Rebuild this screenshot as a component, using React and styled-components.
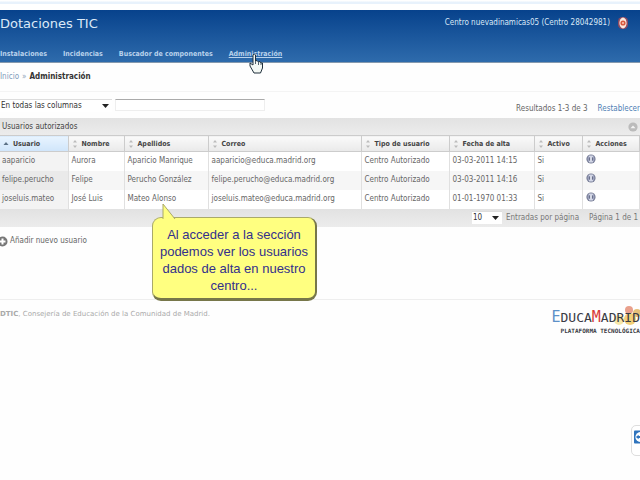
import React from 'react';
import styled, { createGlobalStyle } from 'styled-components';

const GlobalStyle = createGlobalStyle`
    body {
        margin: 0;
        background: #fefefe;
        overflow: hidden;
        font-family: "DejaVu Sans Condensed", "DejaVu Sans", sans-serif;
        font-size: 8px;
        line-height: 12px;
        color: #666;
    }
    * {
        box-sizing: border-box;
    }
`;

const Page = styled.div`
    position: relative;
    min-height: 100vh;
    overflow: hidden;
`;

const TopStrip = styled.div`
    height: 10px;
    border-bottom: 6px solid #fff;
    background: linear-gradient(#fff 1px, #e8f2fc 2px);
`;

const Header = styled.header`
    height: 53px;
    display: flex;
    flex-direction: column;
    justify-content: space-between;
    background: linear-gradient(#07428c, #2e6bac);
    border-bottom: 1px solid #8599ae;
    color: #dbe9f8;
`;

const HeaderTop = styled.div`
    display: flex;
    align-items: center;
    justify-content: space-between;
    height: 28px;
    padding-right: 12px;
`;

const Title = styled.h1`
    margin: 0;
    font-family: "DejaVu Sans", sans-serif;
    font-size: 13px;
    line-height: 16px;
    font-weight: normal;
`;

const Account = styled.div`
    display: flex;
    align-items: center;
    gap: 8px;
    padding-bottom: 2px;
`;

const IconButton = styled.button`
    display: inline-flex;
    padding: 0;
    border: 0;
    background: none;
    color: inherit;
`;

const Nav = styled.nav`
    display: flex;
    gap: 16px;
    padding-bottom: 2px;
`;

const NavLink = styled.a`
    font-size: 7px;
    font-weight: bold;
    color: #b9d2ec;
    text-decoration: ${props => props.$active ? 'underline' : 'none'};
`;

const Breadcrumb = styled.div`
    display: flex;
    align-items: center;
    gap: 3px;
    height: 29px;
    border-bottom: 1px solid #f4f4f4;
    color: #8fa3b8;

    a {
        color: #7f9cbc;
        text-decoration: none;
    }
    strong {
        color: #333;
    }
`;

const Filters = styled.div`
    display: flex;
    align-items: center;
    gap: 3px;
    height: 26px;
`;

const SelectBox = styled.div`
    display: grid;
    align-items: center;
    width: ${props => props.$width}px;
    height: 13px;
    background: #fff;
    border-top: 1px solid #ddd;

    select, svg {
        grid-area: 1 / 1;
    }
    svg {
        justify-self: end;
        margin-right: 3px;
        pointer-events: none;
    }
    select {
        appearance: none;
        width: 100%;
        height: 12px;
        padding: 0 1px;
        border: 0;
        background: none;
        font: inherit;
        color: #333;
    }
`;

const Search = styled.input`
    width: 150px;
    height: 12px;
    padding: 0 2px;
    border: 1px solid #eee;
    border-top-color: #aaa;
    background: #fff;
    font: inherit;
`;

const Results = styled.div`
    display: flex;
    flex: 1;
    justify-content: flex-end;
    gap: 10px;
    padding-top: 8px;
    white-space: nowrap;

    a {
        color: #4f7fb5;
        text-decoration: none;
    }
`;

const Bar = styled.div`
    display: flex;
    align-items: center;
    justify-content: ${props => props.$end ? 'flex-end' : 'space-between'};
    gap: ${props => props.$end ? 4 : 0}px;
    height: ${props => props.$end ? 18 : 17}px;
    padding: 0 2px;
    background: linear-gradient(#e2e2e2, #ececec);
    color: ${props => props.$end ? '#777' : '#444'};
`;

const PageCount = styled.span`
    padding-left: 6px;
`;

const Table = styled.table`
    width: 100%;
    table-layout: fixed;
    border-collapse: collapse;
`;

const Th = styled.th`
    width: ${props => props.$width || 'auto'};
    height: 16px;
    padding: 0 3px;
    border-top: 1px solid #ccc;
    border-bottom: 1px solid #ccc;
    border-right: 1px solid #ccc;
    background: ${props => props.$sorted
        ? 'linear-gradient(#e8f4ff, #cfe5fa)'
        : 'linear-gradient(#fafafa, #e9e9e9)'};
    font-size: 7px;
    color: #444;
    text-align: left;
    white-space: nowrap;
`;

const ThInner = styled.span`
    display: flex;
    align-items: center;
    gap: 4px;
`;

const Td = styled.td`
    height: 19px;
    padding: 0 3px;
    border-right: 1px solid #e0e0e0;
    background: ${props => props.$shade};
    white-space: nowrap;
    vertical-align: middle;

    &:first-child {
        padding-left: 2px;
    }
`;

const AddUser = styled.button`
    display: flex;
    align-items: center;
    gap: 2px;
    height: 29px;
    margin-bottom: 43px;
    padding: 0;
    border: 0;
    background: none;
    font: inherit;
    color: #666;
`;

const Footer = styled.footer`
    display: flex;
    justify-content: space-between;
    padding-top: 8px;
    border-top: 1px solid #eee;
    font-family: "DejaVu Sans", sans-serif;
    font-size: 7px;
    color: #aaa;
`;

const Logo = styled.div`
    display: grid;
    align-content: start;
    justify-items: end;
    font-family: "DejaVu Sans Mono", monospace;
    font-weight: bold;
    color: #393a44;
    white-space: nowrap;

    svg, span {
        grid-column: 1;
    }
    svg {
        grid-row: 1;
        overflow: visible;
    }
`;

const LogoName = styled.span`
    grid-row: 1;
    z-index: 1;
    font-size: 13px;
    line-height: 18px;
    font-weight: normal;
`;

const LogoCap = styled.b`
    font-size: 15px;
    font-weight: normal;
    color: ${props => props.color};
`;

const LogoSub = styled.span`
    font-size: 6px;
    line-height: 8px;
`;

const Callout = styled.div`
    position: absolute;
    left: 152px;
    top: 217px;
    width: 165px;
    padding: 8px 6px 4px;
    border: 1px solid #a9a96a;
    border-right: 2px solid #77774a;
    border-bottom: 3px solid #77774a;
    border-radius: 9px;
    background: #ffff80;
    font-family: "Liberation Sans", sans-serif;
    font-size: 13px;
    line-height: 17px;
    text-align: center;
    color: #33308c;
`;

const CalloutTail = styled.svg`
    position: absolute;
    left: 8px;
    top: -15px;
`;

const Pointer = styled.svg`
    position: absolute;
    left: 249px;
    top: 53px;
`;

const SideTab = styled.button`
    position: absolute;
    right: -10px;
    top: 425px;
    display: flex;
    align-items: flex-start;
    width: 19px;
    height: 31px;
    padding: 4px 2px;
    border: 1px solid #ddd;
    border-radius: 5px;
    background: #fff;
`;

const columns = [
    { label: 'Usuario', width: '68px', sorted: true },
    { label: 'Nombre', width: '56px' },
    { label: 'Apellidos', width: '84px' },
    { label: 'Correo', width: '153px' },
    { label: 'Tipo de usuario', width: '88px' },
    { label: 'Fecha de alta', width: '85px' },
    { label: 'Activo', width: '48px' },
    { label: 'Acciones' },
];

const users = [
    ['aaparicio', 'Aurora', 'Aparicio Manrique', 'aaparicio@educa.madrid.org', 'Centro Autorizado', '03-03-2011 14:15', 'Si'],
    ['felipe.perucho', 'Felipe', 'Perucho González', 'felipe.perucho@educa.madrid.org', 'Centro Autorizado', '03-03-2011 14:16', 'Si'],
    ['joseluis.mateo', 'José Luis', 'Mateo Alonso', 'joseluis.mateo@educa.madrid.org', 'Centro Autorizado', '01-01-1970 01:33', 'Si'],
];

const Arrow = () => (
    <svg width="7" height="4" viewBox="0 0 7 4"><path d="M0 0h7L3.5 4z" fill="#222" /></svg>
);

const SortIcon = ({ sorted }) => (
    <svg width="6" height="10" viewBox="0 0 6 10">
        {sorted
            ? <path d="M0.5 6L3 3L5.5 6z" fill="#5b7186" />
            : <path d="M1 3.5L3 1L5 3.5zM1 6.5L3 9L5 6.5z" fill="#bbb" />}
    </svg>
);

const ExitIcon = () => (
    <svg width="10" height="12" viewBox="0 0 10 12">
        <rect x="0" y="0" width="10" height="12" rx="4.5" fill="#8f4a60" />
        <ellipse cx="5" cy="6" rx="3.6" ry="5.4" fill="#fbe9df" />
        <circle cx="5" cy="6" r="2.6" fill="#d9593e" />
        <circle cx="5" cy="6" r="1" fill="#f6cdbd" />
    </svg>
);

const InfoIcon = () => (
    <svg width="10" height="10" viewBox="0 0 10 10">
        <circle cx="5" cy="5" r="4.6" fill="#777d96" />
        <circle cx="5" cy="5" r="3.4" fill="#a9afc9" />
        <path d="M3 2.2h4M3 7.8h4" stroke="#e4e7f2" />
        <path d="M3.3 3.5v3M6.7 3.5v3" stroke="#59607c" />
        <path d="M5 3v4" stroke="#fff" />
    </svg>
);

const AddIcon = () => (
    <svg width="8" height="11" viewBox="0 0 8 11">
        <circle cx="2.5" cy="5.5" r="5" fill="#777" />
        <path d="M2.5 2.5v6M-0.5 5.5h6" stroke="#fff" strokeWidth="2" />
    </svg>
);

const ToggleIcon = () => (
    <svg width="10" height="10" viewBox="0 0 10 10">
        <circle cx="5" cy="5" r="4.6" fill="#bbb" />
        <path d="M2.5 6.2L5 3.4L7.5 6.2z" fill="#f4f4f4" />
    </svg>
);

const App = () => (
    <Page>
        <GlobalStyle />
        <TopStrip />
        <Header>
            <HeaderTop>
                <Title>Dotaciones TIC</Title>
                <Account>
                    Centro nuevadinamicas05 (Centro 28042981)
                    <IconButton aria-label="Salir"><ExitIcon /></IconButton>
                </Account>
            </HeaderTop>
            <Nav>
                <NavLink href="#instalaciones">Instalaciones</NavLink>
                <NavLink href="#incidencias">Incidencias</NavLink>
                <NavLink href="#buscador">Buscador de componentes</NavLink>
                <NavLink href="#administracion" $active>Administración</NavLink>
            </Nav>
        </Header>

        <Breadcrumb>
            <a href="#inicio">Inicio</a>
            <span>»</span>
            <strong>Administración</strong>
        </Breadcrumb>

        <Filters>
            <SelectBox $width={112}>
                <select aria-label="Columna"><option>En todas las columnas</option></select>
                <Arrow />
            </SelectBox>
            <Search aria-label="Buscar" />
            <Results>
                <span>Resultados 1-3 de 3</span>
                <a href="#restablecer">Restablecer</a>
            </Results>
        </Filters>

        <Bar>
            <span>Usuarios autorizados</span>
            <IconButton aria-label="Plegar"><ToggleIcon /></IconButton>
        </Bar>
        <Table>
            <thead>
                <tr>
                    {columns.map(column => (
                        <Th key={column.label} $width={column.width} $sorted={column.sorted}>
                            <ThInner>
                                <SortIcon sorted={column.sorted} />
                                {column.label}
                            </ThInner>
                        </Th>
                    ))}
                </tr>
            </thead>
            <tbody>
                {users.map((user, i) => (
                    <tr key={user[0]}>
                        {user.map((value, j) => (
                            <Td key={j} $shade={j === 0 ? (i % 2 ? '#eaeaea' : '#f3f3f3') : (i % 2 ? '#f6f6f6' : '#fff')}>
                                {value}
                            </Td>
                        ))}
                        <Td $shade={i % 2 ? '#f6f6f6' : '#fff'}>
                            <IconButton aria-label="Ver usuario"><InfoIcon /></IconButton>
                        </Td>
                    </tr>
                ))}
            </tbody>
        </Table>
        <Bar $end>
            <SelectBox $width={30}>
                <select aria-label="Entradas por página"><option>10</option></select>
                <Arrow />
            </SelectBox>
            <span>Entradas por página</span>
            <PageCount>Página 1 de 1</PageCount>
        </Bar>

        <AddUser><AddIcon />Añadir nuevo usuario</AddUser>

        <Footer>
            <span><b>DTIC</b>, Consejería de Educación de la Comunidad de Madrid.</span>
            <Logo>
                <svg width="28" height="18" viewBox="0 0 28 18">
                    <circle cx="17" cy="2" r="4" fill="#e9a08c" />
                    <circle cx="7" cy="12" r="5" fill="#f6e6a8" />
                    <circle cx="18" cy="11" r="6" fill="#f3cf78" />
                    <circle cx="25" cy="5" r="4" fill="#e7c07a" />
                </svg>
                <LogoName>
                    <LogoCap color="#5d91c8">E</LogoCap>DUCA<LogoCap color="#d83a38">M</LogoCap>ADRID
                </LogoName>
                <LogoSub>PLATAFORMA TECNOLÓGICA</LogoSub>
            </Logo>
        </Footer>

        <Callout>
            <CalloutTail width="16" height="17" viewBox="0 0 16 17">
                <path d="M2 16V1L14 16" fill="#ffff80" stroke="#a9a96a" />
            </CalloutTail>
            Al acceder a la sección podemos ver los usuarios dados de alta en nuestro centro...
        </Callout>

        <Pointer width="15" height="21" viewBox="0 0 15 21">
            <path
                d="M4 2Q5.200 0 6.500 2V8L8 7.500L9.500 9L11 8.500L12 10L13.500 10V15L11.500 20H5L1 13V10L4 12z"
                fill="#f4f8f4"
                stroke="#20303c"
            />
            <path d="M6.500 8v3M9.500 9v3M12 10v2" stroke="#52606a" fill="none" />
        </Pointer>

        <SideTab aria-label="Abrir panel">
            <svg width="14" height="14" viewBox="0 0 14 14">
                <rect width="14" height="14" rx="1" fill="#2f74bd" />
                <circle cx="7" cy="7" r="5.500" fill="#fff" />
                <path d="M2 7L5 4.500V6H9V4.500L12 7L9 9.500V8H5V9.500z" fill="#2f74bd" />
            </svg>
        </SideTab>
    </Page>
);

export default App;
